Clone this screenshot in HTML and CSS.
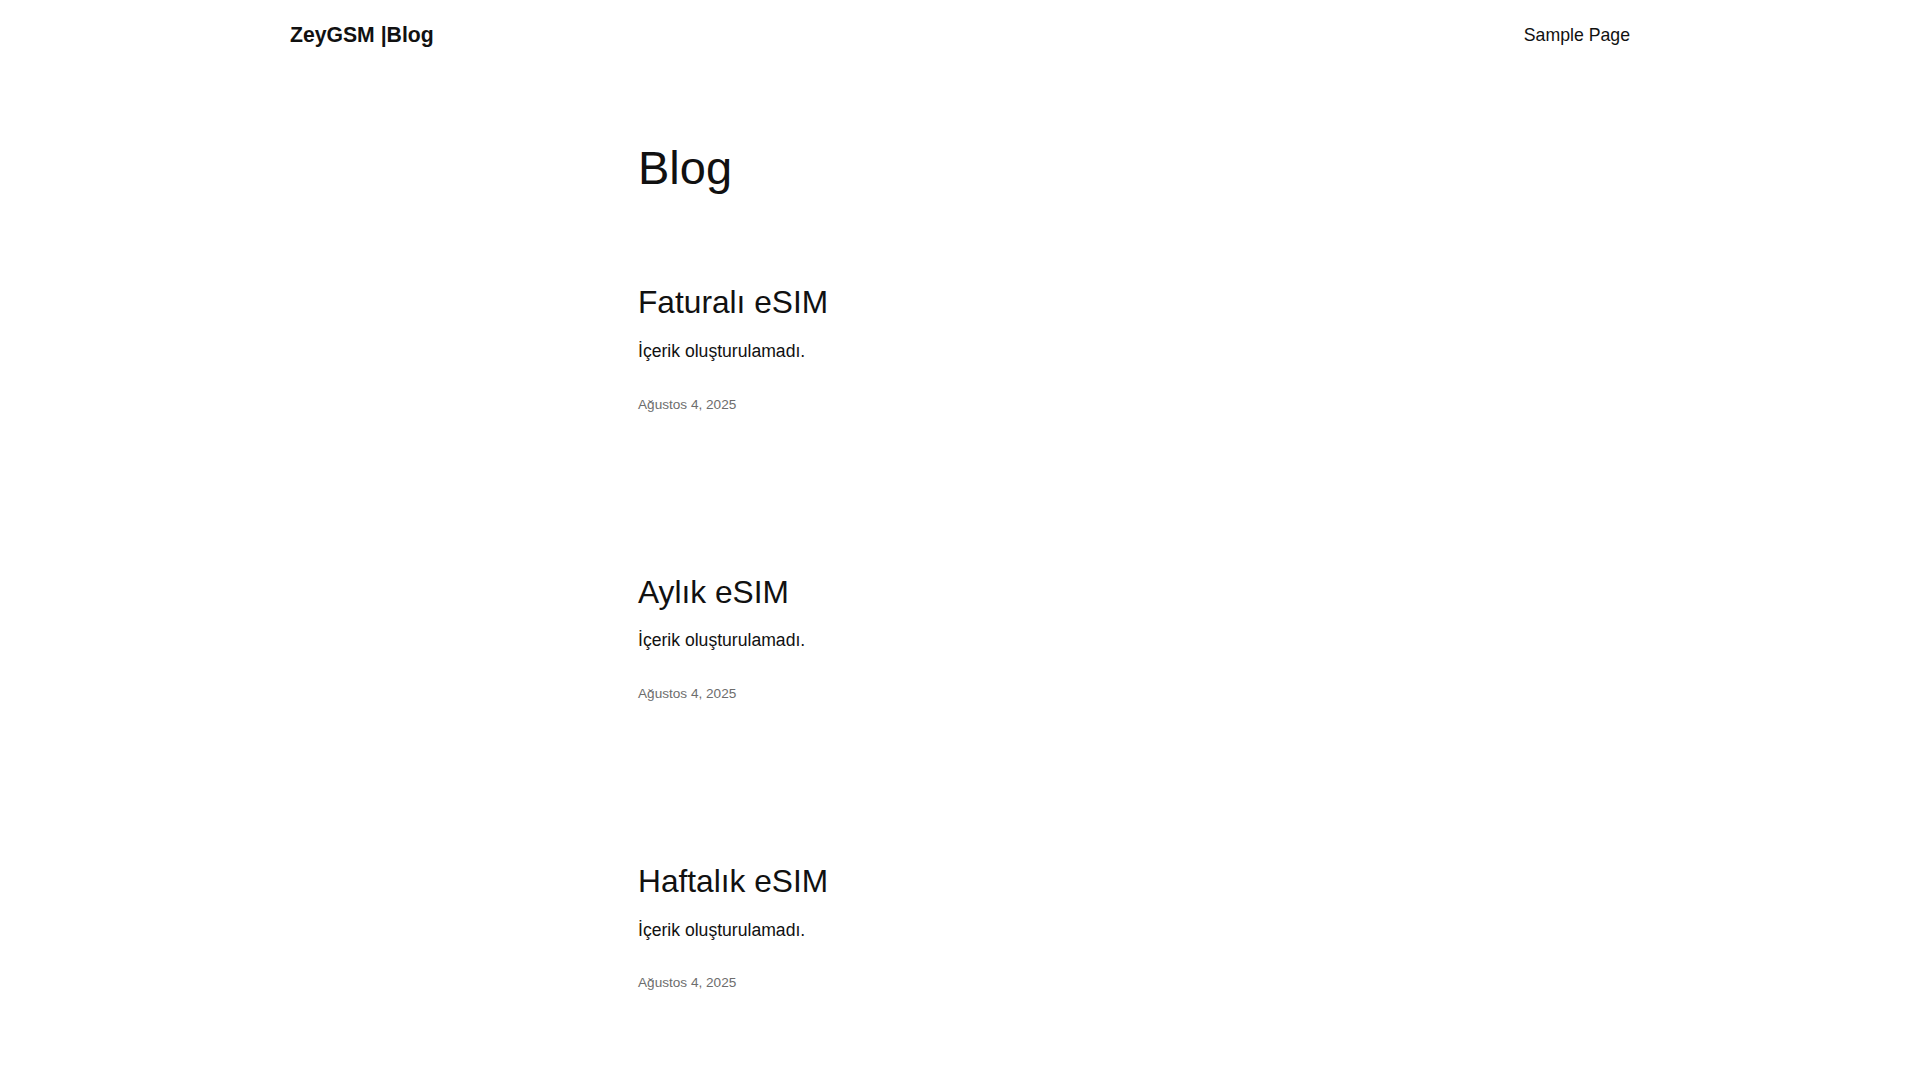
FILE: index.html
```html
<!DOCTYPE html>
<html lang="tr">
<head>
<meta charset="utf-8">
<title>Blog – ZeyGSM |Blog</title>
<link rel="stylesheet" href="styles.css">
</head>
<body>
<header class="site-header">
  <a class="site-title" href="#">ZeyGSM |Blog</a>
  <nav class="site-nav"><a href="#">Sample Page</a></nav>
</header>
<main class="content">
  <h1 class="page-title">Blog</h1>
  <article class="post">
    <h2 class="post-title">Faturalı eSIM</h2>
    <p class="post-excerpt">İçerik oluşturulamadı.</p>
    <div class="post-date">Ağustos 4, 2025</div>
  </article>
  <article class="post">
    <h2 class="post-title">Aylık eSIM</h2>
    <p class="post-excerpt">İçerik oluşturulamadı.</p>
    <div class="post-date">Ağustos 4, 2025</div>
  </article>
  <article class="post">
    <h2 class="post-title">Haftalık eSIM</h2>
    <p class="post-excerpt">İçerik oluşturulamadı.</p>
    <div class="post-date">Ağustos 4, 2025</div>
  </article>
</main>
</body>
</html>
```
FILE: styles.css
```css
html, body {
  margin: 0;
  padding: 0;
  background: #ffffff;
}
body {
  font-family: "Liberation Sans", Arial, sans-serif;
  color: #111111;
}
a {
  color: inherit;
  text-decoration: none;
}
.site-header {
  width: 1340px;
  height: 71px;
  margin: 0 auto;
  display: flex;
  align-items: center;
  justify-content: space-between;
}
.site-title {
  font-size: 21.2px;
  font-weight: 700;
  line-height: 1.2;
  margin-bottom: 2px;
}
.site-nav {
  font-size: 17.7px;
  line-height: 1.2;
}
.content {
  width: 644px;
  margin: 0 auto;
}
.page-title {
  margin: 69px 0 0;
  font-size: 47px;
  font-weight: 400;
  line-height: 1.2;
}
.post {
  padding-top: 87px;
}
.post + .post {
  padding-top: 157.6px;
}
.post-title {
  margin: 0;
  font-size: 31.7px;
  font-weight: 400;
  line-height: 1.2;
}
.post-excerpt {
  margin: 16.8px 0 0;
  font-size: 17.6px;
  line-height: 1.5;
}
.post-date {
  margin-top: 30px;
  font-size: 13.6px;
  line-height: 1.5;
  color: #6d6d6d;
}
```
